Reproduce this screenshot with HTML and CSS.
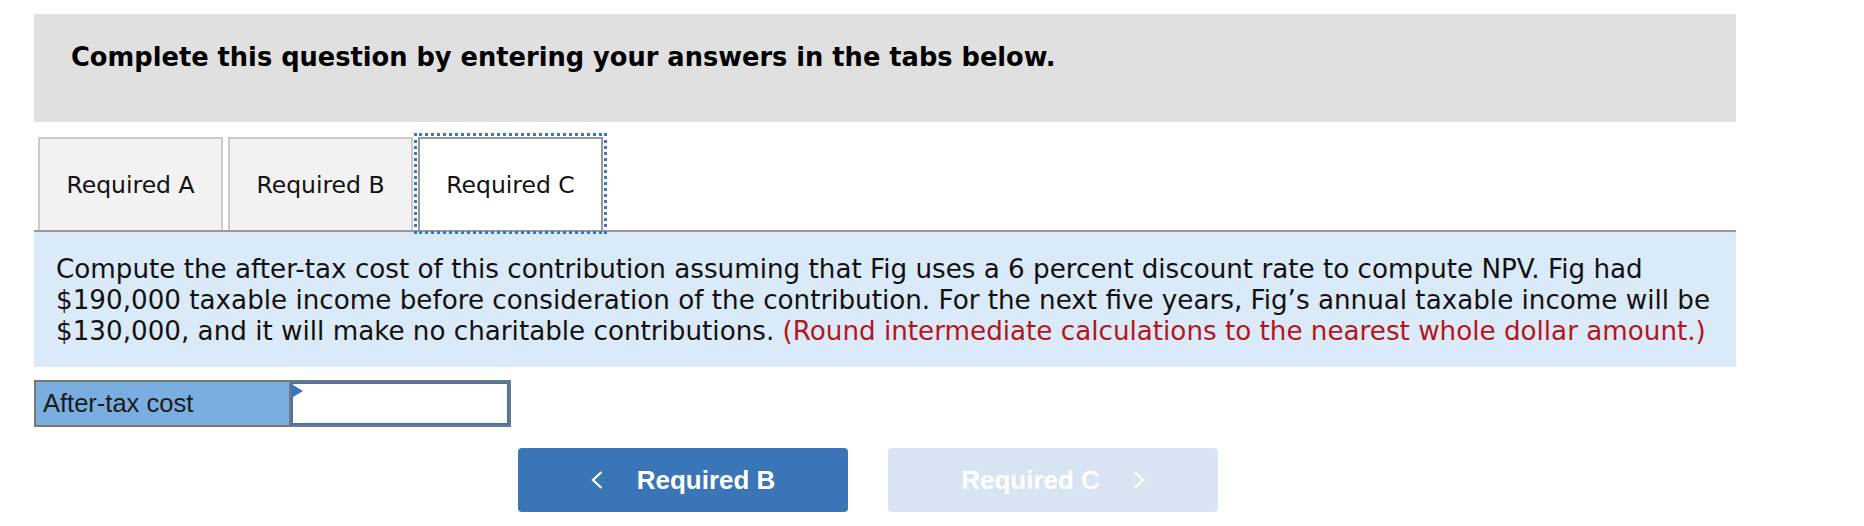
FILE: index.html
```html
<!DOCTYPE html>
<html lang="en">
<head>
<meta charset="utf-8">
<title>Required C</title>
<link rel="stylesheet" href="styles.css">
</head>
<body>
<div class="page">
  <div class="header">
    <h2 class="title">Complete this question by entering your answers in the tabs below.</h2>
  </div>
  <div class="tabs">
    <div class="tab">Required A</div>
    <div class="tab">Required B</div>
    <div class="tab active">Required C</div>
  </div>
  <div class="panel">
    <p class="question">Compute the after-tax cost of this contribution assuming that Fig uses a 6 percent discount rate to compute NPV. Fig had $190,000 taxable income before consideration of the contribution. For the next five years, Fig’s annual taxable income will be $130,000, and it will make no charitable contributions. <span class="note">(Round intermediate calculations to the nearest whole dollar amount.)</span></p>
  </div>
  <div class="answer">
    <div class="label">After-tax cost</div>
    <div class="field"></div>
  </div>
  <div class="nav">
    <button class="btn prev" type="button">
      <svg class="chev" width="12" height="18" viewBox="0 0 12 18"><polyline points="10.5,1 2,9 10.5,17" fill="none" stroke="#fff" stroke-width="2.2"/></svg>
      <span>Required B</span>
    </button>
    <button class="btn next" type="button">
      <span>Required C</span>
      <svg class="chev" width="12" height="18" viewBox="0 0 12 18"><polyline points="1.5,1 10,9 1.5,17" fill="none" stroke="#fff" stroke-width="2.2"/></svg>
    </button>
  </div>
</div>
</body>
</html>
```

FILE: styles.css
```css
html, body {
  margin: 0;
  background: #fff;
}
body {
  padding: 14px 0 0 34px;
  font-family: "DejaVu Sans", Verdana, sans-serif;
  color: #000;
}
.page {
  width: 1702px;
}
.header {
  background: #e0e0e0;
  height: 108px;
  box-sizing: border-box;
  padding: 28px 37px 0;
}
.title {
  margin: 0;
  font-size: 25.7px;
  font-weight: bold;
  line-height: 30px;
}
.tabs {
  display: flex;
  gap: 5px;
  margin-top: 15px;
  padding-left: 4px;
  height: 93px;
  border-bottom: 2px solid #999;
}
.tab {
  width: 185px;
  box-sizing: border-box;
  border: 2px solid #cbcbcb;
  border-bottom: none;
  background: #f2f2f2;
  display: flex;
  align-items: center;
  justify-content: center;
  font-size: 23.5px;
  color: #111;
}
.tab.active {
  background: #fff;
  border-color: #999;
  outline: 3px dotted #3a78c3;
  outline-offset: 1px;
}
.panel {
  background: #dbeaf8;
  padding: 22px 10px 20px 22px;
}
.question {
  margin: 0;
  font-size: 26.2px;
  line-height: 31px;
  color: #111;
}
.note {
  color: #b5151c;
}
.answer {
  display: flex;
  width: max-content;
  margin-top: 13px;
  border: 2px solid #777;
}
.label {
  width: 255px;
  height: 43px;
  box-sizing: border-box;
  padding-left: 7px;
  background: #7aaee0;
  border-right: 2px solid #777;
  font-family: "Liberation Sans", Arial, sans-serif;
  font-size: 25.5px;
  line-height: 43px;
  color: #1a1a1a;
}
.field {
  width: 218px;
  height: 43px;
  box-sizing: border-box;
  border: 2px solid #3a76b8;
  background: #fff;
  position: relative;
}
.field::before {
  content: "";
  position: absolute;
  left: 0;
  top: 1px;
  border-left: 10px solid #3a76c0;
  border-top: 6px solid transparent;
  border-bottom: 6px solid transparent;
}
.nav {
  display: flex;
  gap: 40px;
  margin-top: 21px;
  padding-left: 484px;
}
.btn {
  width: 330px;
  height: 64px;
  border: none;
  border-radius: 4px;
  padding: 0;
  display: flex;
  align-items: center;
  justify-content: center;
  gap: 34px;
  font-family: "Liberation Sans", Arial, sans-serif;
  font-weight: bold;
  font-size: 26px;
  color: #fff;
}
.btn.prev {
  background: #3a76b7;
}
.btn.next {
  background: #d8e4f1;
  gap: 33px;
}
.chev {
  display: block;
}
```
